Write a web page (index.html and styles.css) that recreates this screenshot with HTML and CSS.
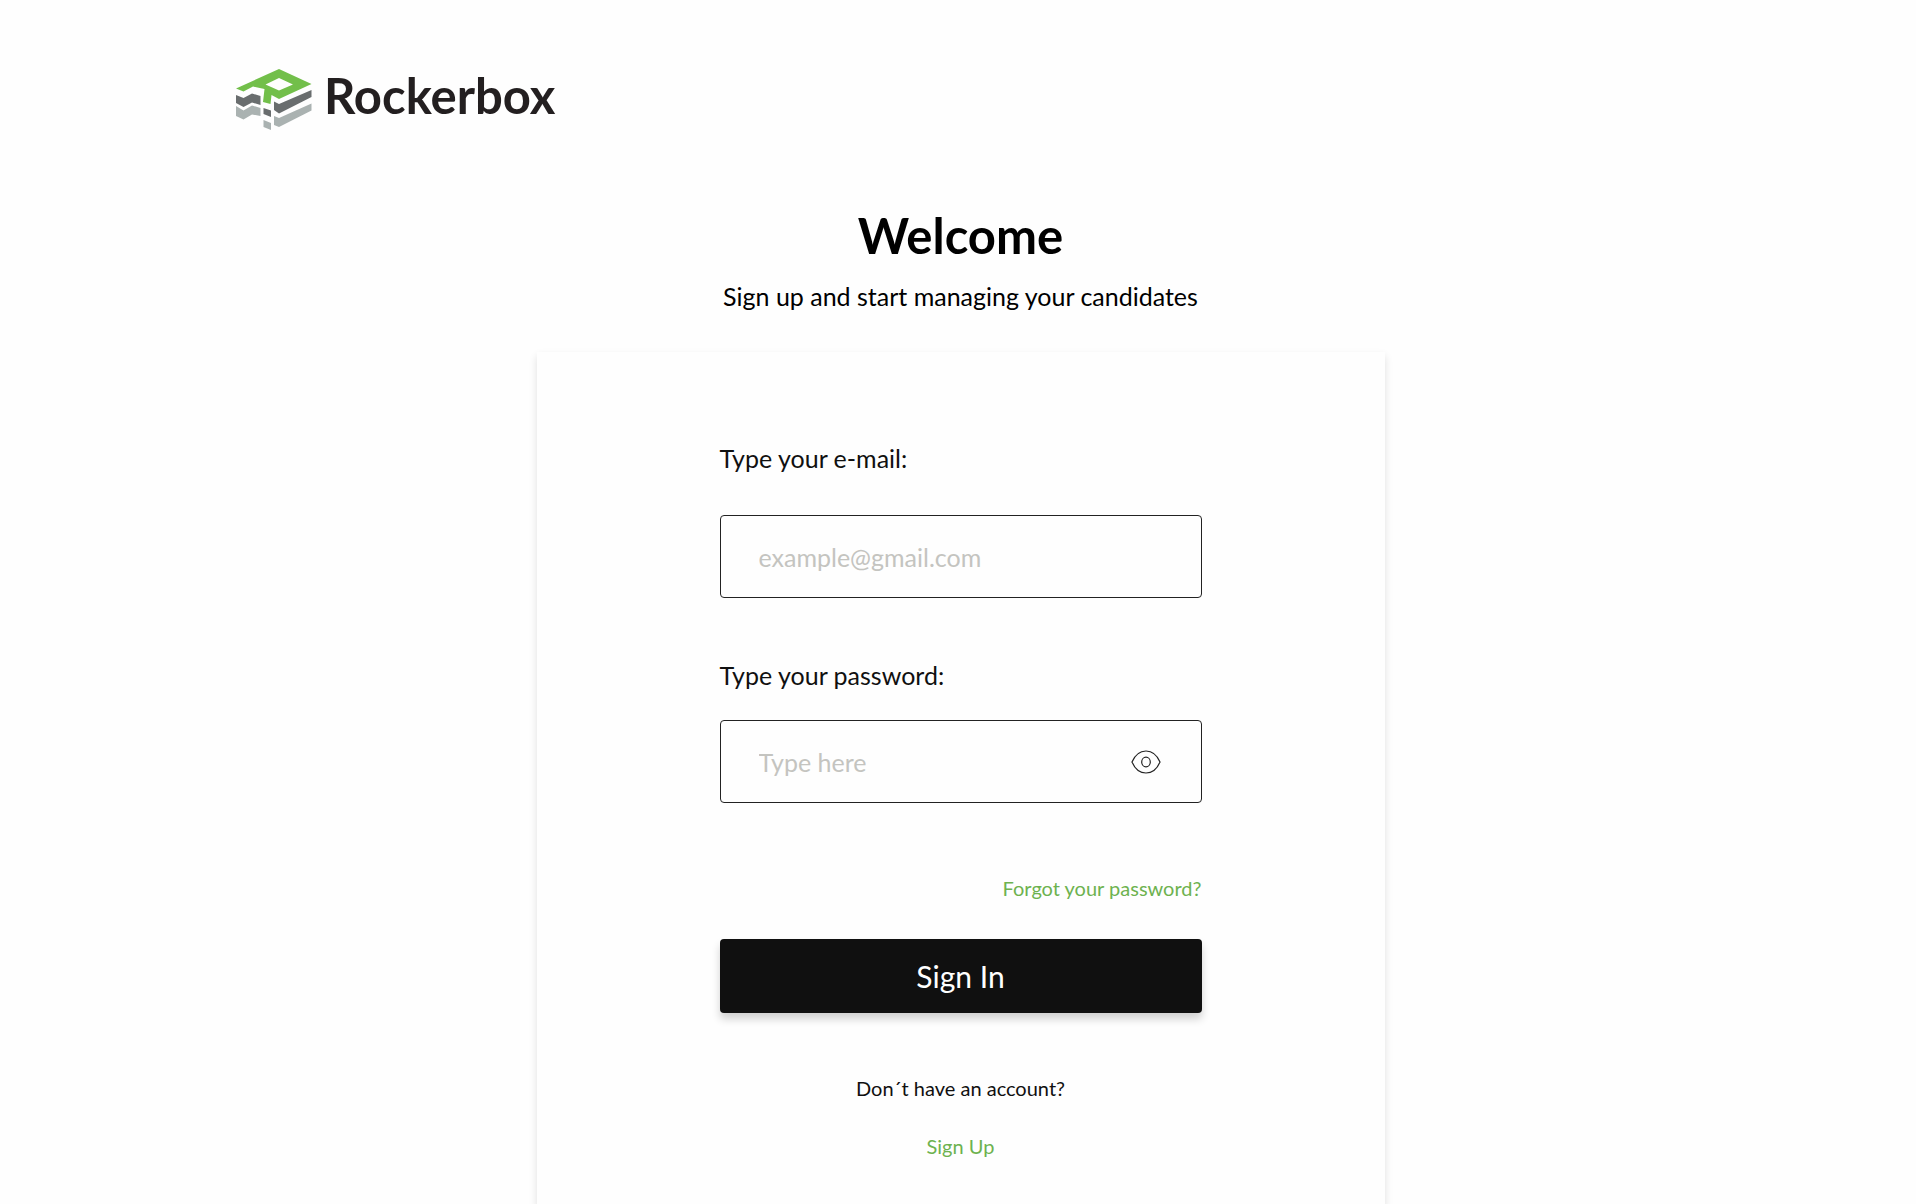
FILE: index.html
```html
<!DOCTYPE html>
<html lang="en">
<head>
<meta charset="utf-8">
<meta name="viewport" content="width=device-width, initial-scale=1">
<title>Rockerbox – Sign In</title>
<link rel="stylesheet" href="styles.css">
</head>
<body>
<header class="header">
  <a class="brand" href="#">
    <svg class="brand-mark" viewBox="0 0 76 62" aria-hidden="true">
      <path fill="#72bf4a" fill-rule="evenodd" d="M0 20.500L43 1L75.500 16L43 31L35.500 27L34.500 36L27 34L28.500 21L17 18.500L7.500 23.500ZM29.500 16.500L43 22.500L57 16.500L43 10Z"/>
      <path fill="#696d6e" d="M0 27L7.500 30L16 25.500L24.500 28V37L16 34.500L7.500 39L0 35ZM38 33.500L43 36L75.500 22V29L43 45.500L38 42ZM27.500 40L35 42.500V49L27.500 46Z"/>
      <path fill="#aab2b1" d="M0 38L7.500 42.500L16 37.500L24.500 40V48L16 46.500L7.500 51.500L0 48ZM38 48L43 50L75.500 35.500V42.500L43 59L38 57ZM27.500 52L35 55V62L27.500 59Z"/>
    </svg>
    <span class="brand-name">Rockerbox</span>
  </a>
</header>
<main class="main">
  <h1 class="title">Welcome</h1>
  <p class="subtitle">Sign up and start managing your candidates</p>
  <form class="card">
    <label class="label" for="email">Type your e-mail:</label>
    <input class="input input-email" id="email" type="email" placeholder="example@gmail.com">
    <label class="label" for="password">Type your password:</label>
    <div class="field">
      <input class="input" id="password" type="password" placeholder="Type here">
      <button class="reveal" type="button" aria-label="Show password">
        <svg viewBox="0 0 30 24" fill="none" stroke="#222" stroke-width="1.200" aria-hidden="true">
          <path d="M1 12C4 5 9 1 15 1S26 5 29 12C26 19 21 23 15 23S4 19 1 12Z"/>
          <ellipse cx="15" cy="12" rx="4.300" ry="4.800"/>
        </svg>
      </button>
    </div>
    <a class="link forgot" href="#">Forgot your password?</a>
    <button class="submit" type="submit">Sign In</button>
    <p class="note">Don´t have an account?</p>
    <a class="link signup" href="#">Sign Up</a>
  </form>
</main>
</body>
</html>
```
FILE: styles.css
```css
* { box-sizing: border-box; }

body {
  margin: 0;
  background: #fefefe;
  color: #101010;
  font-family: Lato, sans-serif;
  font-size: 25px;
  line-height: 32px;
}

.header { padding: 60px 236px 0; }

.brand {
  display: inline-flex;
  align-items: center;
  gap: 12px;
  color: #231f20;
  text-decoration: none;
}

.brand-mark { width: 76px; height: 62px; margin-top: 8px; }

.brand-name {
  font-size: 49px;
  font-weight: 700;
  line-height: 64px;
}

.main {
  display: flex;
  flex-direction: column;
  align-items: center;
  padding-left: 5px;
}

.title {
  margin: 63px 0 0;
  color: #000;
  font-size: 49px;
  line-height: 72px;
}

.subtitle { margin: 9px 0 40px; color: #000; }

.card {
  display: flex;
  flex-direction: column;
  width: 100%;
  max-width: 848px;
  padding: 90px 183px 48px;
  background: #fefefe;
  box-shadow: 0 4px 8px rgba(0, 0, 0, 0.12);
}

.input {
  width: 100%;
  height: 83px;
  padding: 0 38px;
  border: 1px solid #222;
  border-radius: 4px;
  background: #fefefe;
  color: #101010;
  font: inherit;
}

.input::placeholder { color: #c4c4c0; opacity: 1; }

.label { margin-bottom: 29px; }

.input-email { margin: 12px 0 61px; }

.field { display: flex; position: relative; }

.reveal {
  position: absolute;
  top: 0;
  right: 32px;
  display: flex;
  align-items: center;
  width: 48px;
  height: 83px;
  padding: 0 9px;
  border: 0;
  background: none;
}

.reveal svg { width: 30px; height: 24px; }

.link { color: #6db24f; text-decoration: none; }

.forgot, .note, .signup { font-size: 20px; line-height: 24px; }

.forgot { align-self: flex-end; margin: 73px 0 39px; }

.submit {
  height: 74px;
  border: 0;
  border-radius: 4px;
  background: #101010;
  box-shadow: 0 6px 8px rgba(0, 0, 0, 0.18);
  color: #fff;
  font: inherit;
  font-size: 30px;
}

.note { margin: 63px 0 34px; text-align: center; }

.signup { align-self: center; }
```
